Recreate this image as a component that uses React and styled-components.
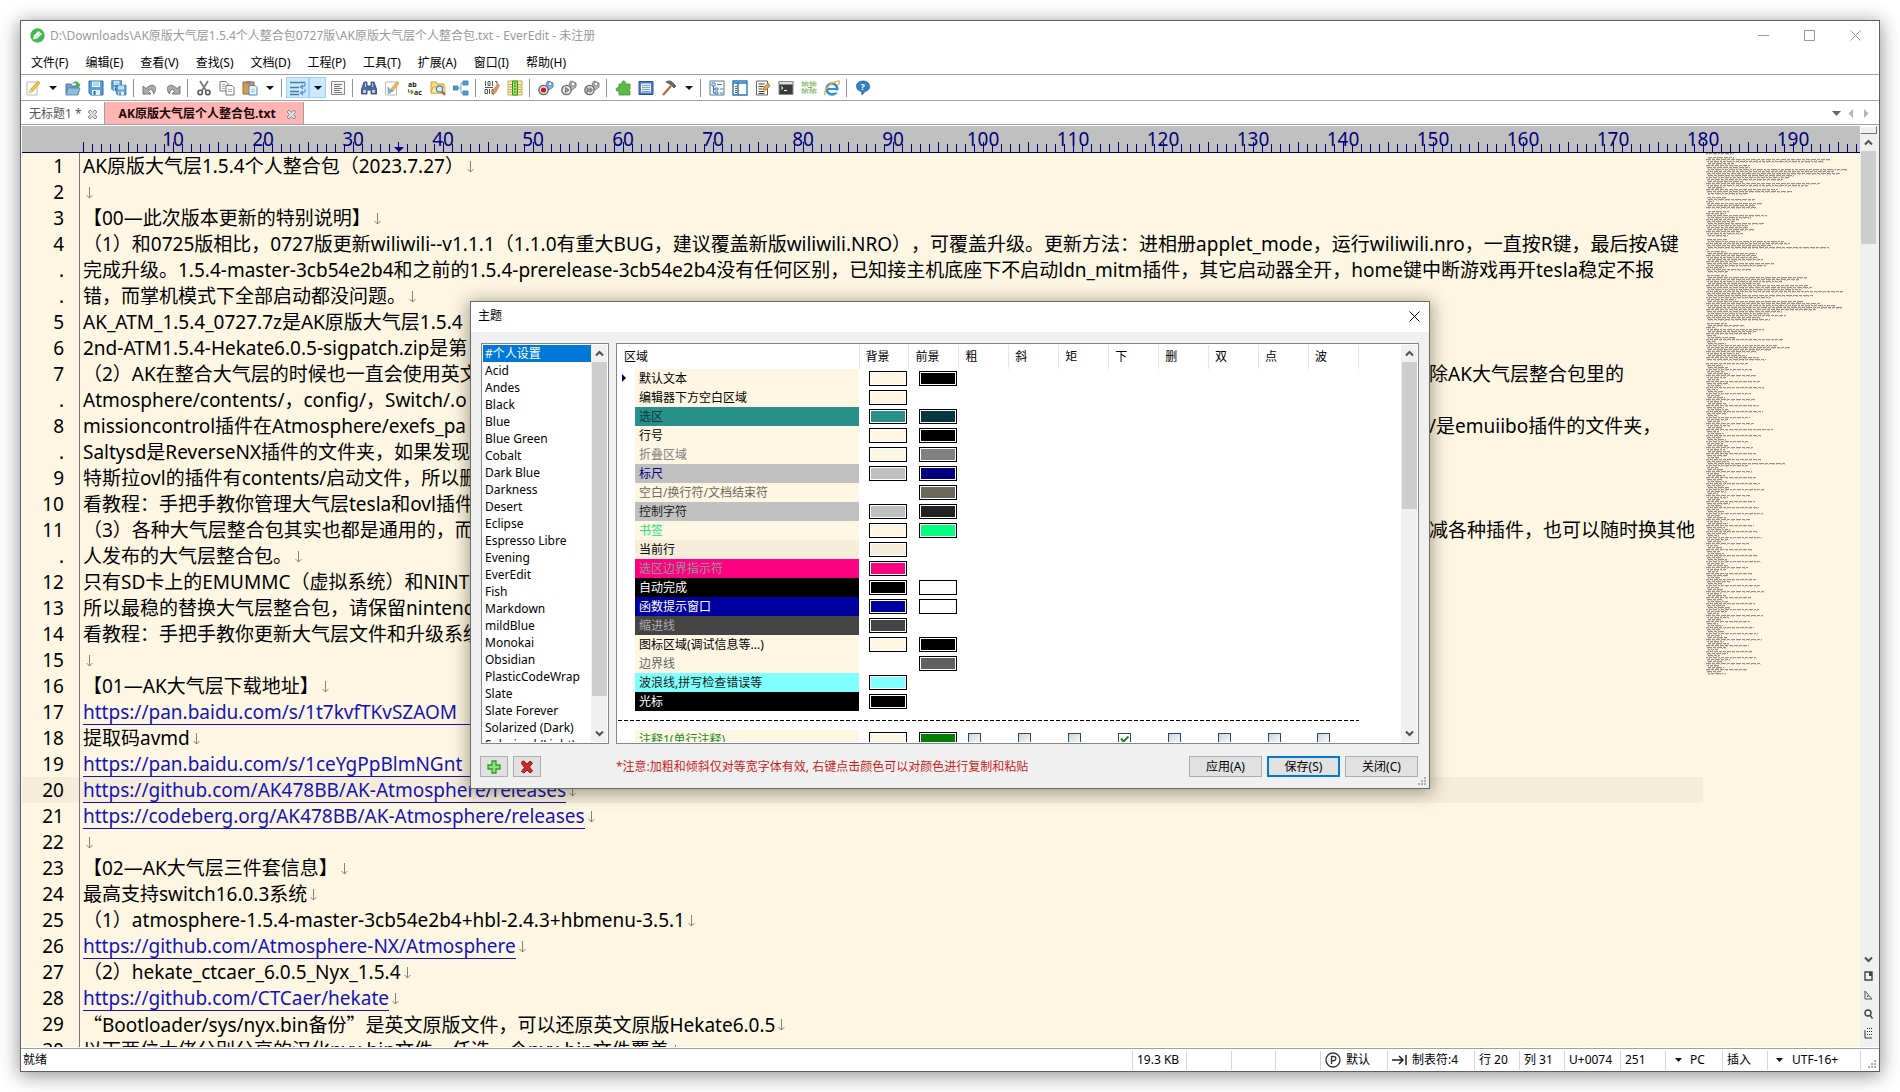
import React from "react";
import styled, { createGlobalStyle, css } from "styled-components";

const UI = `"Noto Sans", "Noto Sans CJK SC", sans-serif`;

const Global = createGlobalStyle`
  * { box-sizing: border-box; }
  body {
    margin: 0;
    background: #fff;
    font-family: ${UI};
    font-size: 12px;
    line-height: 16px;
    color: #000;
    text-spacing-trim: space-all;
    overflow: hidden;
  }
  button { font: inherit; color: inherit; border: 0; background: none; padding: 0; margin: 0; }
  ul { list-style: none; margin: 0; padding: 0; }
`;

const Desktop = styled.div`
  height: 100vh;
  padding: 21px 21px 21px 21px;
`;

const Window = styled.main`
  position: relative;
  height: 100%;
  display: flex;
  flex-direction: column;
  background: #fff;
  outline: 1px solid #56625f;
  box-shadow: 0 3px 18px 2px rgba(0, 0, 0, 0.42);
`;

/* ---------- title bar and menu ---------- */

const TitleBar = styled.header`
  display: flex;
  align-items: center;
  height: 31px;
  padding: 0 17px 2px 9px;
  color: #999;
`;
const Title = styled.h1`
  flex: 1;
  margin: 0 0 0 5px;
  font-size: 12px;
  font-weight: 400;
`;
const WinButtons = styled.div`
  display: flex;
  gap: 34px;
`;
const WinButton = styled.button`
  display: block;
  width: 12px;
  height: 12px;
  svg { display: block; }
`;
const MenuBar = styled.nav`
  display: flex;
  align-items: center;
  gap: 17px;
  height: 23px;
  padding: 0 10px;
  border-bottom: 1px solid #a0a0a0;
`;
const MenuItem = styled.button``;

/* ---------- toolbar ---------- */

const ToolBar = styled.div`
  display: flex;
  align-items: center;
  height: 26px;
  border-bottom: 1px solid #a0a0a0;
`;
const Tool = styled.button`
  display: grid;
  place-items: center;
  width: 23px;
  height: 21px;
  ${(p) => p.$on && css`background: #cce8ff; outline: 1px solid #99d1ff; outline-offset: -1px;`}
  svg { display: block; }
`;
const Caret = styled.button`
  display: grid;
  place-items: center;
  width: 17px;
  height: 21px;
  ${(p) => p.$on && css`background: #cce8ff; outline: 1px solid #99d1ff; outline-offset: -1px;`}
  &::after {
    content: "";
    border: 4px solid transparent;
    border-top-color: #111;
    border-bottom: 0;
  }
`;
const ToolSep = styled.span`
  width: 1px;
  height: 18px;
  margin: 0 4px 0 3px;
  background: #909090;
`;

/* ---------- tabs ---------- */

const TabBar = styled.div`
  display: flex;
  align-items: stretch;
  height: 24px;
  padding-top: 1px;
  border-bottom: 1px solid #a0a0a0;
`;
const Tab = styled.div`
  display: flex;
  align-items: center;
  gap: ${(p) => (p.$active ? 10 : 5)}px;
  padding: 2px 6px 0 ${(p) => (p.$active ? 14 : 8)}px;
  border-right: 1px solid #a0a0a0;
  color: ${(p) => (p.$active ? "#1a0808" : "#555")};
  background: ${(p) => (p.$active ? "#ffb4b4" : "transparent")};
  font-weight: ${(p) => (p.$active ? 700 : 400)};
  button { width: 11px; height: 11px; }
  svg { display: block; }
`;
const TabNav = styled.div`
  display: flex;
  align-items: center;
  gap: 6px;
  margin-left: auto;
  padding-right: 8px;
`;

/* ---------- editor ---------- */

const EditorFrame = styled.section`
  flex: 1;
  min-height: 0;
  display: flex;
  padding: 1px 0 1px 1px;
`;
const Editor = styled.div`
  flex: 1;
  min-width: 0;
  display: flex;
  flex-direction: column;
  background: #fdf6e3;
`;
const Ruler = styled.div`
  position: relative;
  flex: none;
  display: flex;
  height: 27px;
  padding-left: 106px;
  overflow: hidden;
  background: #c0c0c0;
  border-bottom: 1px solid #000050;
  color: #000080;
  font-size: 19px;
  line-height: 27px;
  text-align: center;
`;
const Ticks = styled.span`
  position: absolute;
  left: 61px;
  right: 0;
  bottom: 0;
  height: 8px;
  background: repeating-linear-gradient(90deg, #000080 0 1px, transparent 1px ${(p) => p.$step}px);
  ${(p) => p.$step > 9 && css`height: 10px;`}
`;
const RulerMark = styled.span`
  position: absolute;
  left: 372px;
  bottom: 0;
  border: 5px solid transparent;
  border-top-color: #000080;
  border-bottom: 0;
`;
const RulerCell = styled.span`
  flex: 0 0 90px;
`;
const Page = styled.div`
  flex: 1;
  min-height: 0;
  display: flex;
  overflow: hidden;
`;
const Lines = styled.div`
  flex: 1;
  min-width: 0;
  font-size: 19px;
  line-height: 26px;
`;
const Line = styled.div`
  display: flex;
  height: 26px;
  background: ${(p) => (p.$current ? "#f5edda" : "transparent")};
`;
const Gutter = styled.span`
  flex: none;
  width: 58px;
  padding-right: 15px;
  text-align: right;
  border-right: 1px solid #777;
`;
const Code = styled.span`
  display: flex;
  padding-left: 3px;
  white-space: pre;
`;
const Lead = styled.span`
  width: ${(p) => p.$w}px;
  flex: none;
  overflow: hidden;
`;
const Wide = styled.span`
  font-family: "Noto Sans CJK SC", sans-serif;
`;
const Link = styled.a`
  height: 26px;
  min-width: ${(p) => (p.$long ? 400 : 0)}px;
  color: #1414b8;
  text-decoration: none;
  border-bottom: 1px solid #1414b8;
`;
const Newline = styled.svg`
  flex: none;
  margin: 8px 0 0 2px;
`;
const MiniMap = styled.svg`
  flex: none;
  width: 157px;
  height: 524px;
`;

const SideBar = styled.div`
  flex: none;
  display: flex;
  flex-direction: column;
  align-items: center;
  width: 19px;
  padding-right: 2px;
  background: #f0f0f0;
  svg { display: block; }
`;
const Splitter = styled.div`
  width: 17px;
  height: 8px;
  border: 1px solid #fff;
  border-right-color: #777;
  border-bottom-color: #777;
`;
const SideIcons = styled.div`
  display: flex;
  flex-direction: column;
  gap: 7px;
  padding: 2px 0 8px;
`;
const ArrowButton = styled.button`
  display: grid;
  place-items: center;
  width: 16px;
  height: 17px;
`;
const Track = styled.div`
  flex: 1;
  width: 15px;
`;
const Thumb = styled.div`
  height: ${(p) => p.$h}px;
  background: #cdcdcd;
`;

/* ---------- status bar ---------- */

const StatusBar = styled.footer`
  display: flex;
  align-items: center;
  height: 23px;
  border-top: 1px solid #a0a0a0;
`;
const StatusText = styled.span`
  flex: 1;
  padding-left: 2px;
`;
const StatusCell = styled.span`
  display: flex;
  align-items: center;
  gap: ${(p) => p.$gap || 5}px;
  width: ${(p) => p.$w}px;
  height: 19px;
  padding-left: ${(p) => p.$pad || 4}px;
  border-left: 1px solid #d7d7d7;
  white-space: nowrap;
`;

/* ---------- dialog ---------- */

const Overlay = styled.div`
  position: absolute;
  inset: 0;
  display: grid;
  place-items: center;
`;
const Dialog = styled.section`
  position: relative;
  width: 960px;
  margin-bottom: 2px;
  background: #f0f0f0;
  border: 1px solid #646d66;
  box-shadow: 0 2px 16px 2px rgba(40, 30, 0, 0.4);
`;
const DialogTitle = styled.header`
  display: flex;
  align-items: center;
  justify-content: space-between;
  height: 30px;
  padding: 0 9px 2px 7px;
  background: #fff;
  h2 { margin: 0; font-size: 12px; font-weight: 400; }
  svg { display: block; }
`;
const DialogBody = styled.div`
  display: flex;
  gap: 7px;
  height: 401px;
  margin: 11px 10px 0;
`;
const Panel = styled.div`
  display: flex;
  flex: ${(p) => (p.$w ? `0 0 ${p.$w}px` : "1")};
  min-width: 0;
  padding: 1px;
  overflow: hidden;
  border: 1px solid #828790;
  background: #fff;
`;
const ThemeList = styled.ul`
  flex: 1;
  overflow: hidden;
`;
const ThemeItem = styled.li`
  height: 17px;
  padding-left: 2px;
  line-height: 17px;
  white-space: nowrap;
  ${(p) => p.$on && css`background: #0078d7; color: #fff;`}
`;
const ScrollBar = styled.div`
  flex: none;
  display: flex;
  flex-direction: column;
  align-items: center;
  width: 16px;
  background: #f0f0f0;
`;
const TableBox = styled.div`
  flex: 1;
  overflow: hidden;
`;
const Table = styled.table`
  width: 741px;
  table-layout: fixed;
  border-collapse: collapse;
  th, td { padding: 0; font-weight: 400; text-align: left; }
`;
const RegionCol = styled.col`
  width: 241px;
`;
const Th = styled.th`
  height: 24px;
  && { padding-left: 6px; }
  border-right: 1px solid #e5e5e5;
`;
const Row = styled.tr`
  height: 19px;
`;
const Region = styled.div`
  position: relative;
  height: 19px;
  margin-left: 17px;
  padding-left: 4px;
  line-height: 19px;
  background: ${(p) => p.$bg};
  color: ${(p) => p.$fg};
`;
const RowMark = styled.span`
  position: absolute;
  left: -13px;
  top: 5px;
  border: 4px solid transparent;
  border-left-color: #000050;
  border-right: 0;
`;
const Swatch = styled.button`
  display: block;
  width: 38px;
  height: 15px;
  margin-left: 10px;
  border: 1px solid #000;
  background: ${(p) => p.$c};
  box-shadow: inset 0 0 0 1px #fff;
`;
const Check = styled.input`
  appearance: none;
  display: block;
  width: 13px;
  height: 13px;
  margin: 0 0 0 9px;
  border: 1px solid #2c4a63;
  background: linear-gradient(135deg, #cbd5de, #fff);
  &:checked {
    background: #fff url("data:image/svg+xml,%3Csvg xmlns='http://www.w3.org/2000/svg' viewBox='0 0 11 11'%3E%3Cpath d='M2 4.5 4.5 7.5 9.5 2.5' fill='none' stroke='%23218a21' stroke-width='2'/%3E%3C/svg%3E");
  }
`;
const Dashes = styled.div`
  height: 1px;
  background: repeating-linear-gradient(90deg, #000 0 4px, transparent 4px 6px);
`;
const DialogFooter = styled.footer`
  display: flex;
  align-items: center;
  gap: 5px;
  padding: 12px 11px 11px 9px;
`;
const IconButton = styled.button`
  display: grid;
  place-items: center;
  width: 28px;
  height: 21px;
  background: #e1e1e1;
  border: 1px solid #adadad;
`;
const Notice = styled.p`
  flex: 1;
  margin: 0 0 0 70px;
  color: #c81e1e;
`;
const PushButton = styled.button`
  width: 73px;
  height: 21px;
  background: #e1e1e1;
  border: ${(p) => (p.$primary ? "2px solid #0078d7" : "1px solid #adadad")};
  line-height: 16px;
`;
const Grip = styled.svg`
  position: absolute;
  right: 2px;
  bottom: 2px;
`;

/* ---------- icons ---------- */

const I = ({ children, w = 16 }) => (
  <svg width={w} height="16" viewBox={`0 0 ${w} 16`} fill="none" aria-hidden="true">{children}</svg>
);
const Chevron = ({ up }) => (
  <svg width="9" height="7" viewBox="0 0 9 7" fill="none">
    <path d={up ? "M1 5.5 4.5 2 8 5.5" : "M1 1.5 4.5 5 8 1.5"} stroke="#505050" strokeWidth="2" />
  </svg>
);
const CloseX = ({ color = "#999", size = 11 }) => (
  <svg width={size} height={size} viewBox="0 0 11 11" fill="none"><path d="M.5.5l10 10M10.5.5l-10 10" stroke={color} /></svg>
);
const TabX = () => (
  <svg width="11" height="11" viewBox="0 0 11 11">
    <path d="M1 3 3 1 5.500 3.500 8 1 10 3 7.500 5.500 10 8 8 10 5.500 7.500 3 10 1 8 3.500 5.500Z" fill="#ddd" stroke="#8c8c8c" />
  </svg>
);
const Floppy = ({ x = 0, y = 0, s = 1 }) => (
  <g transform={`translate(${x} ${y}) scale(${s})`}>
    <path d="M1 1h14v14H3l-2-2z" fill="#5aa0d0" stroke="#2270a8" />
    <path d="M4 1.500h8V7H4z" fill="#eef7fd" /><path d="M5 3h6M5 5h6" stroke="#7fb3d8" />
    <path d="M4 10h8v5H4z" fill="#dfeef8" /><path d="M5.500 11h2v4h-2z" fill="#2270a8" />
  </g>
);
const Reel = ({ dot, mark }) => (
  <I>
    <path d="M8 4 10 1l5 2v4l-4 3z" fill={dot ? "#8db8e8" : "#bdbdbd"} stroke={dot ? "#4a78b0" : "#777"} strokeWidth=".9" />
    <circle cx="12" cy="4" r="2" fill="#fff" stroke={dot ? "#4a78b0" : "#777"} strokeWidth=".9" />
    <circle cx="5.500" cy="10" r="4.700" fill="#e4e4e4" stroke="#666" strokeWidth="1.300" />
    {dot && <circle cx="5.500" cy="10" r="2.600" fill="#c42020" />}
    {mark && <path d={mark} fill="#999" stroke="#666" strokeWidth=".8" />}
  </I>
);
const Bits = () => (
  <g stroke="#555" strokeWidth="1">
    <path d="M1.500 1v5M4 1.500h2v4H4zM8.500 1v5M11 1.500h2v3M1 9.500h2.500v4H1zM5.500 9v5M8 9.500h2v4H8zM1 7.500h8" />
  </g>
);

const icons = {
  new: <I><path d="M2 2h10v13H2z" fill="#fff" stroke="#b5b9c0" /><path d="M5 10 13 1l2 2-8 9-3 1z" fill="#f3c343" stroke="#c59422" strokeWidth=".7" /><path d="m4 13 1-3 2 2z" fill="#fae6c0" /></I>,
  open: <I><path d="M1 4h5l1 2h6v8H1z" fill="#6f9fc8" stroke="#4b7ba6" /><path d="M3 8h12l-2 7H1z" fill="#8fbce0" stroke="#4b7ba6" strokeWidth=".8" /><path d="M7 4c3-4 6-3 7 0l1.500-.5L14 8l-4-3 1.500-.5C11 3 9 3 7 4z" fill="#4fae4f" /></I>,
  save: <I><Floppy /></I>,
  saveAll: <I><Floppy s={0.7} /><Floppy x={4.500} y={4.500} s={0.7} /></I>,
  undo: <I><path d="M1 6v8h8L6.500 11.500C8.500 8 11 9 11.500 14 16.500 8 12 1 4 8.500z" fill="#ababab" stroke="#6c6c6c" strokeWidth=".9" /></I>,
  redo: <I><path d="M15 6v8H7l2.500-2.500C7.500 8 5 9 4.500 14-.5 8 4 1 12 8.500z" fill="#ababab" stroke="#6c6c6c" strokeWidth=".9" /></I>,
  cut: <I><path d="M4 1 10 10.500M12 1 6 10.500" stroke="#777" strokeWidth="1.800" /><circle cx="4.200" cy="12.500" r="2.200" stroke="#555" strokeWidth="1.600" /><circle cx="11.800" cy="12.500" r="2.200" stroke="#555" strokeWidth="1.600" /></I>,
  copy: <I><path d="M1 1.500h6l2 2V11H1z" fill="#fff" stroke="#777" /><path d="M7 5.500h6l2 2V15H7z" fill="#fff" stroke="#777" /><path d="M3 4.500h3M3 6.500h3M3 8.500h3M9 9.500h4M9 11.500h4" stroke="#aaa" /></I>,
  paste: <I><path d="M1 2h11v12H1z" fill="#d79a55" stroke="#9a6a2e" /><path d="M4 1h5v3H4z" fill="#888" /><path d="M7 5.500h6l2 2V15H7z" fill="#e8f3fc" stroke="#4a86bd" /><path d="M9 9.500h4M9 11.500h4" stroke="#9cc3e4" /></I>,
  wrap: <I w={18}><path d="M1 2.500h15M1 7.500h9M1 11.500h9M1 14.500h9" stroke="#4a78a8" strokeWidth="1.300" /><path d="M16 3c1 3-1 4-4 4M14 5l-2.500 2L14 9M16 9c1 3-1 4-4 4M14 11l-2.500 2L14 15" stroke="#5d8fc0" strokeWidth="1.300" /></I>,
  doc: <I><path d="M1.500 1.500h13v13h-13z" fill="#f2f2f2" stroke="#888" /><path d="M4 4.500h8M4 6.500h6M4 8.500h8M4 10.500h6M4 12.500h8" stroke="#777" /></I>,
  find: <I><path d="M3 2h3v4h4V2h3l2.500 7v5H10v-4H6v4H.500V9z" fill="#4d6ca0" stroke="#27406e" strokeWidth=".8" /><path d="M2 10h3v3H2zM11 10h3v3h-3zM4 3h1v4H4zM11 3h1v4h-1z" fill="#b9cbe6" /></I>,
  replace: <I><path d="M1.500 2h11v13h-11z" fill="#fff" stroke="#bbb" /><path d="m6 10 7-8.500L15 3 9 11z" fill="#efb95a" stroke="#b8842a" strokeWidth=".6" /><path d="M4 7v7l5-3-3-1z" fill="#76b3e0" stroke="#4a8bc0" strokeWidth=".5" /></I>,
  abac: <I><text x="1" y="7" fontSize="7" fontWeight="700" fontFamily="Noto Sans" fill="#222">ab</text><text x="7" y="15" fontSize="7" fontWeight="700" fontFamily="Noto Sans" fill="#222">ac</text><path d="M1.500 9v3H6M4 10 6 12 4 14" stroke="#6c8c1c" strokeWidth="1.200" /></I>,
  findFolder: <I><path d="M1 2h5l1 2h7v9H1z" fill="#fbdc82" stroke="#d39c30" /><path d="M3 7h12v6H1z" fill="#fdeaa8" stroke="#d39c30" strokeWidth=".7" /><circle cx="9.500" cy="9" r="3.200" fill="#d5ecfa" stroke="#55819f" strokeWidth="1.200" /><path d="m12 11.500 3 3.500" stroke="#a0672e" strokeWidth="2" /></I>,
  tree: <I><path d="M4 8h4M12 3H8v10h4" stroke="#7aa6c6" /><path d="M0 6h5v4H0zM10 1h5v4h-5zM10 11h5v4h-5z" fill="#4f9fd6" stroke="#2f7cb2" strokeWidth=".8" /></I>,
  binary: <I><Bits /><path d="m9 10 5-6 1.500 1.500L12 12l-3 3z" fill="#d79c68" stroke="#a86e3c" strokeWidth=".6" /></I>,
  columns: <I><path d="M1 1h14v14H1z" fill="#f7f2c4" stroke="#c9a24a" /><path d="M2 4.500h12M2 7h12M2 9.500h12M2 12h12" stroke="#c2a250" /><path d="M5.500 1h5v14h-5z" fill="#a4e05c" stroke="#3d8f23" /><path d="M8 2v12" stroke="#2f7a1a" strokeDasharray="2 1" /></I>,
  rec: <Reel dot />,
  play: <Reel mark="M4.500 7.500 8 10 4.500 12.500z" />,
  playMany: <Reel mark="M3 7.500 5.500 10 3 12.500zM6 7.500 8.500 10 6 12.500z" />,
  puzzle: <I><path d="M4 4h3c-1-4 4-4 3.500 0H15v5c-1.500 0-1.500 2 0 2v4H4v-4c-4 1-4-4 0-3.500z" fill="#5cb84a" stroke="#3d962f" strokeWidth=".8" /></I>,
  panel: <I><path d="M1 1.500h14v13H1z" fill="#4a7cc8" stroke="#2850a0" /><path d="M3 3.500h10v9H3z" fill="#e8f0fb" /><path d="M4 5.500h8M4 7.500h8M4 9.500h8M4 11.500h8" stroke="#7fa1d6" /></I>,
  hammer: <I><path d="m2 15 8-9" stroke="#b86838" strokeWidth="2.200" /><path d="M5 2c3-2 6-1 7 1l3 3-2 2-3-3C8 4 7 3 5 2z" fill="#6a6a6a" stroke="#444" strokeWidth=".7" /></I>,
  outline: <I><path d="M1 1h14v14H1z" fill="#f7fafd" stroke="#5c7893" /><path d="M3 3h3v3H3zM6 8h3v2H6zM6 12h3v2H6z" fill="#fff" stroke="#2a6fb4" strokeWidth=".9" /><path d="M8 4.500h5M11 9h3M11 13h3M4.500 6v7H6M4.500 9H6" stroke="#2a6fb4" strokeWidth=".9" /></I>,
  layout: <I><path d="M1 1h14v14H1z" fill="#fff" stroke="#2a76b8" strokeWidth="1.400" /><path d="M6 2v13M1 3h14" stroke="#2a76b8" strokeWidth="1.400" /><path d="M3 6.500h2M3 8.500h2M3 10.500h2M3 12.500h2" stroke="#666" /></I>,
  editDoc: <I><path d="M1.500 1h11v14h-11z" fill="#fff" stroke="#666" /><path d="M3.500 4h6M3.500 6.500h5M3.500 9h4M3.500 11.500h6M3.500 13.500h6" stroke="#444" /><path d="m8 10 1-3 4-4 2 3-4 4z" fill="#eaa04a" stroke="#a96220" strokeWidth=".7" /></I>,
  cmd: <I><path d="M1 1.500h14v13H1z" fill="#3b3b3b" stroke="#8a8a8a" /><path d="M1 1.500h14v3H1z" fill="#e0e0e0" stroke="#8a8a8a" /><path d="m3 6.500 2 1.500-2 1.500M6 10.500h3" stroke="#fff" /></I>,
  green: <I><path d="M1 2h6v4H1zM9 2h6v4H9zM1 9h6v4H1zM9 9h6v4H9z" fill="#cdeab8" stroke="#7cb764" strokeWidth=".9" strokeDasharray="2 1" /><path d="M2 4h4M10 4h4M2 11h4M10 11h4M7 7.500h4" stroke="#8a8" /></I>,
  ie: <I><circle cx="8" cy="9" r="5.300" stroke="#2f8fdc" strokeWidth="2.800" /><path d="M4 9h9" stroke="#2f8fdc" strokeWidth="2" /><path d="M10 10.500h6v2h-6z" fill="#fff" /><path d="M1 15C-1 11 6 2 15 1c1 1 0 3-1 4" stroke="#e7b73a" strokeWidth="1.400" /></I>,
  help: <I><path d="M8 1c8 0 9 9 2 10.500L7 15l-.5-3.500C-1 10 0 1 8 1z" fill="#2d83bd" stroke="#1c6196" strokeWidth=".7" /><text x="5.500" y="10" fontSize="9" fontWeight="700" fontFamily="Noto Sans" fill="#fff">?</text></I>,
};

/* ---------- data ---------- */

const MENUS = ["文件(F)", "编辑(E)", "查看(V)", "查找(S)", "文档(D)", "工程(P)", "工具(T)", "扩展(A)", "窗口(I)", "帮助(H)"];

const TOOLS = [
  "new", "v", "open", "save", "saveAll", "|", "undo", "redo", "|", "cut", "copy", "paste", "v", "|",
  "wrap*", "v*", "doc", "|", "find", "replace", "abac", "findFolder", "tree", "|", "binary", "columns", "|",
  "rec", "play", "playMany", "|", "puzzle", "panel", "hammer", "v", "|",
  "outline", "layout", "editDoc", "cmd", "green", "ie", "|", "help",
];

const RULER = Array.from({ length: 19 }, (_, i) => (i + 1) * 10);

const LINES = [
  { n: 1, t: "AK原版大气层1.5.4个人整合包（2023.7.27）", e: 1 },
  { n: 2, t: "", e: 1 },
  { n: 3, t: "【00—此次版本更新的特别说明】", e: 1 },
  { n: 4, t: "（1）和0725版相比，0727版更新wiliwili--v1.1.1（1.1.0有重大BUG，建议覆盖新版wiliwili.NRO），可覆盖升级。更新方法：进相册applet_mode，运行wiliwili.nro，一直按R键，最后按A键" },
  { t: "完成升级。1.5.4-master-3cb54e2b4和之前的1.5.4-prerelease-3cb54e2b4没有任何区别，已知接主机底座下不启动ldn_mitm插件，其它启动器全开，home键中断游戏再开tesla稳定不报" },
  { t: "错，而掌机模式下全部启动都没问题。", e: 1 },
  { n: 5, t: "AK_ATM_1.5.4_0727.7z是AK原版大气层1.5.4" },
  { n: 6, t: "2nd-ATM1.5.4-Hekate6.0.5-sigpatch.zip是第" },
  { n: 7, t: "（2）AK在整合大气层的时候也一直会使用英文", tail: "除AK大气层整合包里的" },
  { t: "Atmosphere/contents/，config/，Switch/.o" },
  { n: 8, t: "missioncontrol插件在Atmosphere/exefs_pa", tail: "/是emuiibo插件的文件夹，" },
  { t: "Saltysd是ReverseNX插件的文件夹，如果发现" },
  { n: 9, t: "特斯拉ovl的插件有contents/启动文件，所以删" },
  { n: 10, t: "看教程：手把手教你管理大气层tesla和ovl插件" },
  { n: 11, t: "（3）各种大气层整合包其实也都是通用的，而", tail: "减各种插件，也可以随时换其他" },
  { t: "人发布的大气层整合包。", e: 1 },
  { n: 12, t: "只有SD卡上的EMUMMC（虚拟系统）和NINT" },
  { n: 13, t: "所以最稳的替换大气层整合包，请保留nintendo" },
  { n: 14, t: "看教程：手把手教你更新大气层文件和升级系统" },
  { n: 15, t: "", e: 1 },
  { n: 16, t: "【01—AK大气层下载地址】", e: 1 },
  { n: 17, t: "https://pan.baidu.com/s/1t7kvfTKvSZAOM", link: 1, long: true },
  { n: 18, t: "提取码avmd", e: 1 },
  { n: 19, t: "https://pan.baidu.com/s/1ceYgPpBlmNGnt", link: 1, long: true },
  { n: 20, t: "https://github.com/AK478BB/AK-Atmosphere/releases", link: 1, e: 1, current: 1 },
  { n: 21, t: "https://codeberg.org/AK478BB/AK-Atmosphere/releases", link: 1, e: 1 },
  { n: 22, t: "", e: 1 },
  { n: 23, t: "【02—AK大气层三件套信息】", e: 1 },
  { n: 24, t: "最高支持switch16.0.3系统", e: 1 },
  { n: 25, t: "（1）atmosphere-1.5.4-master-3cb54e2b4+hbl-2.4.3+hbmenu-3.5.1", e: 1 },
  { n: 26, t: "https://github.com/Atmosphere-NX/Atmosphere", link: 1, e: 1 },
  { n: 27, t: "（2）hekate_ctcaer_6.0.5_Nyx_1.5.4", e: 1 },
  { n: 28, t: "https://github.com/CTCaer/hekate", link: 1, e: 1 },
  { n: 29, t: "“Bootloader/sys/nyx.bin备份”是英文原版文件，可以还原英文原版Hekate6.0.5", e: 1 },
  { n: 30, t: "以下两位大佬分别分享的汉化nyx.bin文件，任选一个nyx.bin文件覆盖", e: 1 },
];

const THEMES = ["#个人设置", "Acid", "Andes", "Black", "Blue", "Blue Green", "Cobalt", "Dark Blue", "Darkness", "Desert", "Eclipse", "Espresso Libre", "Evening", "EverEdit", "Fish", "Markdown", "mildBlue", "Monokai", "Obsidian", "PlasticCodeWrap", "Slate", "Slate Forever", "Solarized (Dark)", "Solarized (Light)"];

const CREAM = "#fdf6e3";
const REGIONS = [
  ["默认文本", CREAM, "#000", CREAM, "#000"],
  ["编辑器下方空白区域", CREAM, "#000", CREAM, null],
  ["选区", "#27918a", "#073642", "#27918a", "#073642"],
  ["行号", CREAM, "#000", CREAM, "#000"],
  ["折叠区域", CREAM, "#808080", CREAM, "#808080"],
  ["标尺", "#c0c0c0", "#000080", "#c0c0c0", "#000080"],
  ["空白/换行符/文档结束符", CREAM, "#6e675b", null, "#6e675b"],
  ["控制字符", "#c0c0c0", "#222", "#c0c0c0", "#222"],
  ["书签", CREAM, "#22e07c", CREAM, "#00ff80"],
  ["当前行", "#f5edda", "#000", "#f5edda", null],
  ["选区边界指示符", "#ff0080", "#8e9a9a", "#ff0080", null],
  ["自动完成", "#000", "#fff", "#000", "#fff"],
  ["函数提示窗口", "#0000a0", "#fff", "#0000a0", "#fff"],
  ["缩进线", "#444", "#aaa", "#444", null],
  ["图标区域(调试信息等...)", CREAM, "#000", CREAM, "#000"],
  ["边界线", CREAM, "#666", null, "#606060"],
  ["波浪线,拼写检查错误等", "#80ffff", "#222", "#80ffff", null],
  ["光标", "#000", "#fff", "#000", null],
];
const STYLES = ["粗", "斜", "矩", "下", "删", "双", "点", "波"];

/* overview of the document: one entry per text row, the run length in pixels */
const OVERVIEW_TOP = [
  28, 0, 28, 124, 118, 28, 44, 44, 141, 128, 134, 88, 84, 77, 37, 114, 102, 18, 72, 86, 42, 0,
  21, 49, 8, 56, 49, 51, 0, 23, 20, 61, 45, 33, 29, 58, 42, 43, 48, 34, 37, 22, 0,
  21, 79, 84, 65, 123, 2, 20, 51, 51, 51, 57, 30, 68, 60, 18, 45, 22, 0,
  21, 101, 93, 76, 55, 102, 106, 95, 137, 37, 107, 65, 30, 97, 114, 129, 136, 110, 76, 63, 80, 55, 64, 0,
  21, 39, 10, 58, 50, 45, 10, 30, 77, 10, 20, 72, 84, 65, 51, 34, 41, 53, 60, 0,
];
const OVERVIEW = [
  ...OVERVIEW_TOP,
  ...Array.from({ length: 261 - OVERVIEW_TOP.length }, (_, i) => {
    if (i === 33) return 67;
    if (i === 50) return 79;
    return i % 3 === 0 ? 42 + ((i * 7) % 17) : 12 + ((i * 5) % 13);
  }),
];

/* ---------- parts ---------- */

const Text = ({ children }) =>
  children.split(/([“”])/).map((s, i) => (i % 2 ? <Wide key={i}>{s}</Wide> : s));

const Eol = () => (
  <Newline width="8" height="12" viewBox="0 0 8 12" fill="none">
    <path d="M4.500 0v11M1.500 8l3 3 3-3" stroke="#7b7466" strokeWidth=".9" />
  </Newline>
);

const DocLine = ({ line }) => {
  const body = line.link ? <Link href={line.t} $long={line.long}>{line.t}</Link> : <span><Text>{line.t}</Text></span>;
  return (
    <Line $current={line.current}>
      <Gutter>{line.n || "."}</Gutter>
      <Code>
        {line.tail ? <Lead $w={1346}>{line.t}</Lead> : body}
        {line.tail && <span>{line.tail}</span>}
        {line.e && <Eol />}
      </Code>
    </Line>
  );
};

const Scroll = ({ thumb }) => (
  <ScrollBar>
    <ArrowButton aria-label="向上"><Chevron up /></ArrowButton>
    <Track><Thumb $h={thumb} /></Track>
    <ArrowButton aria-label="向下"><Chevron /></ArrowButton>
  </ScrollBar>
);

const RegionRow = ({ row: [name, bg, fg, back, fore], first, checks }) => (
  <Row>
    <td><Region $bg={bg} $fg={fg}>{first && <RowMark />}{name}</Region></td>
    <td>{back && <Swatch $c={back} aria-label={`${name} 背景`} />}</td>
    <td>{fore && <Swatch $c={fore} aria-label={`${name} 前景`} />}</td>
    {STYLES.map((s) => (
      <td key={s}>{checks && <Check type="checkbox" aria-label={s} defaultChecked={s === "下"} />}</td>
    ))}
  </Row>
);

const GripDots = () => (
  <Grip width="9" height="9" viewBox="0 0 9 9" fill="#b0b0b0">
    <path d="M6 0h2v2H6zM3 3h2v2H3zM6 3h2v2H6zM0 6h2v2H0zM3 6h2v2H3zM6 6h2v2H6z" />
  </Grip>
);

const Tri = ({ d, fill = "#111" }) => <svg width="9" height="9" viewBox="0 0 9 9"><path d={d} fill={fill} /></svg>;

function ThemeDialog() {
  return (
    <Dialog role="dialog" aria-labelledby="dlg">
      <DialogTitle>
        <h2 id="dlg">主题</h2>
        <button aria-label="关闭"><CloseX color="#000" /></button>
      </DialogTitle>
      <DialogBody>
        <Panel $w={128}>
          <ThemeList role="listbox" aria-label="主题">
            {THEMES.map((t, i) => <ThemeItem key={t} role="option" aria-selected={i === 0} $on={i === 0}>{t}</ThemeItem>)}
          </ThemeList>
          <Scroll thumb={334} />
        </Panel>
        <Panel>
          <TableBox>
            <Table>
              <colgroup>
                <RegionCol />
                {Array.from({ length: 10 }, (_, i) => <col key={i} />)}
              </colgroup>
              <thead><tr>{["区域", "背景", "前景", ...STYLES].map((h) => <Th key={h} scope="col">{h}</Th>)}</tr></thead>
              <tbody>
                {REGIONS.map((r, i) => <RegionRow key={r[0]} row={r} first={i === 0} />)}
                <Row><td colSpan={11}><Dashes /></td></Row>
                <RegionRow row={["注释1(单行注释)", CREAM, "#228b22", CREAM, "#008000"]} checks />
              </tbody>
            </Table>
          </TableBox>
          <Scroll thumb={147} />
        </Panel>
      </DialogBody>
      <DialogFooter>
        <IconButton aria-label="添加">
          <I><path d="M6 2h4v4h4v4h-4v4H6v-4H2V6h4z" fill="#8fe07a" stroke="#2f9a2f" strokeWidth="1.300" /></I>
        </IconButton>
        <IconButton aria-label="删除">
          <I><path d="M3 2.500 5 2l3 3 3-3 2.500 2-3 4 3 4L11 14l-3-3-3 3-2.500-1.500 3-4-3-4z" fill="#d02a2a" stroke="#961414" /></I>
        </IconButton>
        <Notice>*注意:加粗和倾斜仅对等宽字体有效, 右键点击颜色可以对颜色进行复制和粘贴</Notice>
        <PushButton>应用(A)</PushButton>
        <PushButton $primary>保存(S)</PushButton>
        <PushButton>关闭(C)</PushButton>
      </DialogFooter>
      <GripDots />
    </Dialog>
  );
}

export default function App() {
  return (
    <Desktop>
      <Global />
      <Window>
        <TitleBar>
          <svg width="15" height="15" viewBox="0 0 15 15"><circle cx="7.500" cy="7.500" r="7.200" fill="#3fba50" /><path d="m3 11.500 1-4L8.500 3l3.500 3-5 4.500z" fill="#fff" /><path d="m5.500 9.500 4.500-4.500" stroke="#a5deae" /></svg>
          <Title>D:\Downloads\AK原版大气层1.5.4个人整合包0727版\AK原版大气层个人整合包.txt - EverEdit - 未注册</Title>
          <WinButtons>
            <WinButton aria-label="最小化"><svg width="11" height="11"><path d="M0 5.500h11" stroke="#999" /></svg></WinButton>
            <WinButton aria-label="最大化"><svg width="11" height="11"><path d="M.5.5h10v10H.5z" fill="none" stroke="#999" /></svg></WinButton>
            <WinButton aria-label="关闭"><CloseX /></WinButton>
          </WinButtons>
        </TitleBar>
        <MenuBar>{MENUS.map((m) => <MenuItem key={m}>{m}</MenuItem>)}</MenuBar>
        <ToolBar>
          {TOOLS.map((t, i) => {
            const on = t.endsWith("*");
            const id = t.replace("*", "");
            if (id === "|") return <ToolSep key={i} />;
            if (id === "v") return <Caret key={i} $on={on} aria-label="更多" />;
            return <Tool key={i} $on={on} aria-label={id}>{icons[id]}</Tool>;
          })}
        </ToolBar>
        <TabBar>
          <Tab>无标题1 *<button aria-label="关闭标签"><TabX /></button></Tab>
          <Tab $active>AK原版大气层个人整合包.txt<button aria-label="关闭标签"><TabX /></button></Tab>
          <TabNav>
            <Tri d="M0 2h9L4.500 7z" fill="#666" />
            <Tri d="M6 0v9L1.500 4.500z" fill="#b5b5b5" />
            <Tri d="M2 0v9l4.500-4.500z" fill="#b5b5b5" />
          </TabNav>
        </TabBar>
        <EditorFrame>
          <Editor>
            <Ruler>
              <Ticks $step={9} />
              <Ticks $step={45} />
              <RulerMark />
              {RULER.map((n) => <RulerCell key={n}>{n}</RulerCell>)}
            </Ruler>
            <Page>
              <Lines>{LINES.map((l, i) => <DocLine key={i} line={l} />)}</Lines>
              <MiniMap viewBox="0 0 157 524" fill="none">
                {OVERVIEW.map((w, i) => w > 0 && (
                  <g key={i} stroke="#6e685c">
                    <path d={`M${3 + (i % 3)} ${i * 2 + 0.5}H${3 + w}`} strokeOpacity=".7" strokeDasharray={`${2 + (i % 4)} 1 3 1 ${4 + (i % 3)} 1`} />
                    <path d={`M${3 + (i % 3)} ${i * 2 + 1.5}H${3 + w}`} strokeOpacity=".28" strokeDasharray={`${1 + (i % 3)} 1 2 2`} />
                  </g>
                ))}
              </MiniMap>
            </Page>
          </Editor>
          <SideBar>
            <Splitter />
            <ArrowButton aria-label="向上"><Chevron up /></ArrowButton>
            <Track><Thumb $h={93} /></Track>
            <ArrowButton aria-label="向下"><Chevron /></ArrowButton>
            <SideIcons>
              <svg width="9" height="12" viewBox="0 0 9 12" fill="none"><path d="M1 2h7v8H1z" stroke="#444" strokeWidth="1.400" /><path d="M5 2h3v4H5z" fill="#444" /></svg>
              <svg width="9" height="12" viewBox="0 0 9 12" fill="none"><path d="M1 2v8h7z" stroke="#555" /><path d="M3 6v2h2z" fill="#555" /></svg>
              <svg width="9" height="12" viewBox="0 0 9 12" fill="none"><circle cx="4" cy="5" r="3" stroke="#444" strokeWidth="1.400" /><path d="m6 7 2.500 3.500" stroke="#444" strokeWidth="1.400" /></svg>
              <svg width="9" height="12" viewBox="0 0 9 12" fill="none"><path d="M1 3v8h7" stroke="#333" /><path d="M3 1.500h6M3 4.500h6M3 7.500h6" stroke="#333" strokeDasharray="1 1" /></svg>
            </SideIcons>
          </SideBar>
        </EditorFrame>
        <StatusBar>
          <StatusText>就绪</StatusText>
          <StatusCell $w={54}>19.3 KB</StatusCell>
          <StatusCell $w={45} />
          <StatusCell $w={44} />
          <StatusCell $w={45} />
          <StatusCell $w={67}>
            <svg width="16" height="16" viewBox="0 0 16 16" fill="none"><circle cx="8" cy="8" r="7" stroke="#333" strokeWidth="1.300" /><path d="M6.500 12V4.500h2.200a2 2 0 0 1 0 4.200H6.500" stroke="#333" strokeWidth="1.400" /></svg>
            默认
          </StatusCell>
          <StatusCell $w={87}>
            <svg width="15" height="10" viewBox="0 0 15 10" fill="none"><path d="M0 5h11M7 1l4 4-4 4M14 0v10" stroke="#222" strokeWidth="1.500" /></svg>
            制表符:4
          </StatusCell>
          <StatusCell $w={45}>行 20</StatusCell>
          <StatusCell $w={45}>列 31</StatusCell>
          <StatusCell $w={56}>U+0074</StatusCell>
          <StatusCell $w={45}>251</StatusCell>
          <StatusCell $w={57} $pad={8} $gap={7}><Tri d="M1 2h7L4.500 6z" />PC</StatusCell>
          <StatusCell $w={45}>插入</StatusCell>
          <StatusCell $w={93} $pad={7} $gap={8}><Tri d="M1 2h7L4.500 6z" />UTF-16+</StatusCell>
          <StatusCell $w={19} />
        </StatusBar>
        <GripDots />
        <Overlay><ThemeDialog /></Overlay>
      </Window>
    </Desktop>
  );
}
